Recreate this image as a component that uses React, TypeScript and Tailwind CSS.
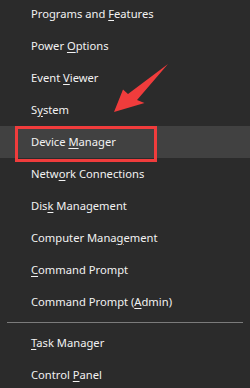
import React from 'react'

type Item = { before: string; key: string; after: string; active?: boolean }

const top: Item[] = [
  { before: 'Programs and ', key: 'F', after: 'eatures' },
  { before: 'Power ', key: 'O', after: 'ptions' },
  { before: 'Event ', key: 'V', after: 'iewer' },
  { before: 'S', key: 'y', after: 'stem' },
  { before: 'Device ', key: 'M', after: 'anager', active: true },
  { before: 'Netw', key: 'o', after: 'rk Connections' },
  { before: 'Dis', key: 'k', after: ' Management' },
  { before: 'Computer Mana', key: 'g', after: 'ement' },
  { before: '', key: 'C', after: 'ommand Prompt' },
  { before: 'Command Prompt (', key: 'A', after: 'dmin)' },
]

const bottom: Item[] = [
  { before: '', key: 'T', after: 'ask Manager' },
  { before: 'Control ', key: 'P', after: 'anel' },
]

function Row({ item }: { item: Item }) {
  return (
    <div className={`h-8 flex items-center pl-[31px] text-[11.2px] text-[#f2f2f2] ${item.active ? 'bg-[#414141]' : ''}`}>
      <span>
        {item.before}
        <span className="underline underline-offset-2">{item.key}</span>
        {item.after}
      </span>
    </div>
  )
}

export default function App() {
  return (
    <div className="relative w-[250px] h-[388px] overflow-hidden bg-[#2b2b2b] font-['Noto_Sans',sans-serif]">
      <div className="-mt-[2px]">
        {top.map((it) => (
          <Row key={it.before + it.key} item={it} />
        ))}
        {/* separator */}
        <div className="py-1 px-[7px]">
          <div className="h-px bg-[#7b7b7b]" />
        </div>
        {bottom.map((it) => (
          <Row key={it.before + it.key} item={it} />
        ))}
      </div>

      {/* red highlight box */}
      <div className="absolute left-[15px] top-[126px] w-[142px] h-[36px] border-[3px] border-[#f03c3c]" />

      {/* red arrow */}
      <svg className="absolute left-0 top-0" width="250" height="388" viewBox="0 0 250 388">
        <polygon
          points="168,64 137,100 144.5,103 114,112 123,89.5 128,94"
          fill="#f03c3c"
        />
      </svg>
    </div>
  )
}
